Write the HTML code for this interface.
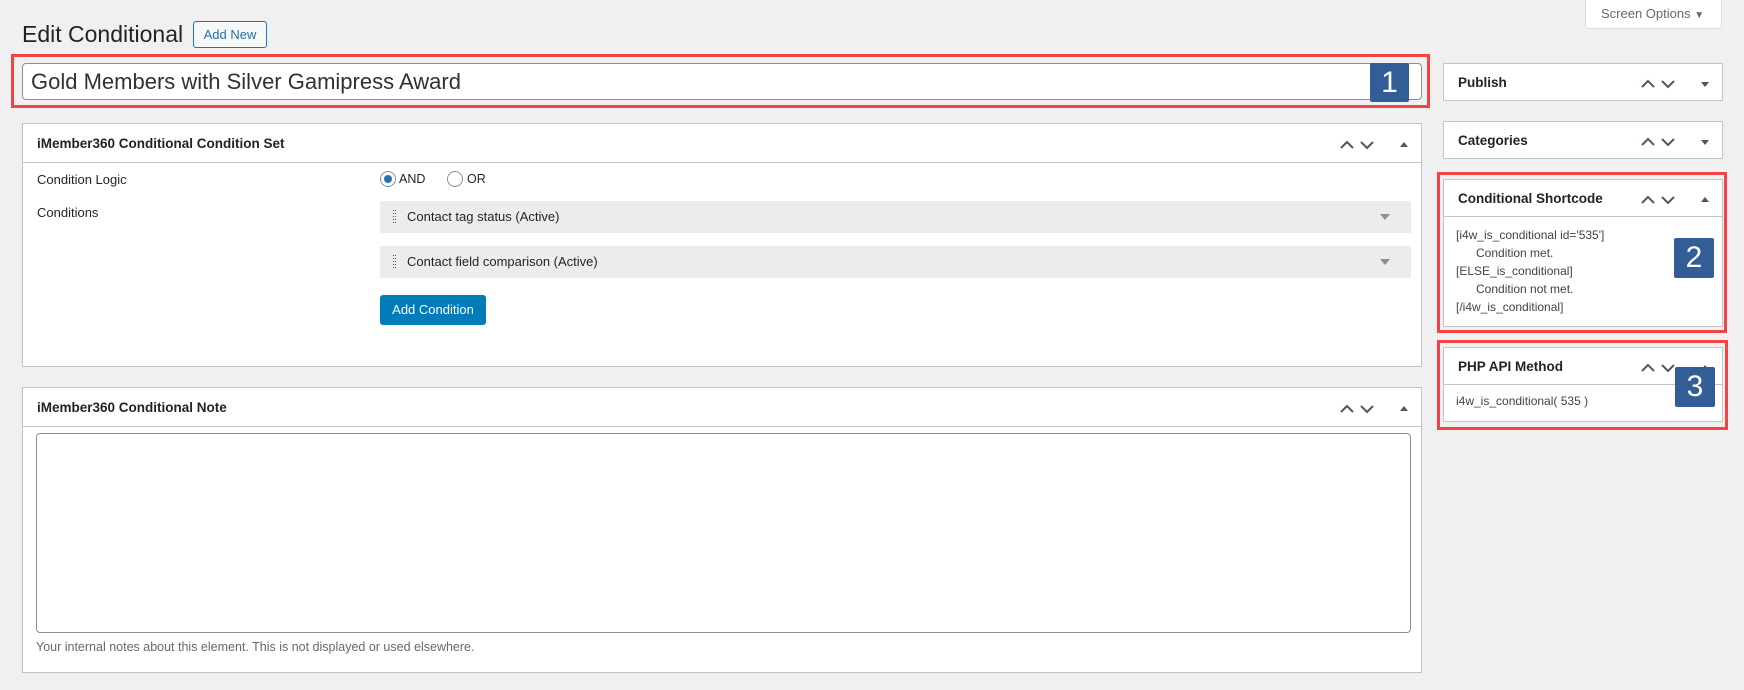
<!DOCTYPE html>
<html><head><style>
*{box-sizing:border-box;margin:0;padding:0}
body{width:1744px;height:690px;background:#f0f0f1;font-family:"Liberation Sans",sans-serif;color:#1d2327;position:relative;overflow:hidden;font-size:13px}
.a{position:absolute;white-space:nowrap}
.box{position:absolute;background:#fff;border:1px solid #c3c4c7}
.hd{position:absolute;left:0;right:0;top:0;border-bottom:1px solid #c3c4c7}
.ht{position:absolute;left:14px;font-weight:bold;font-size:13.5px}
.red{position:absolute;border:3px solid #f04447}
.badge{position:absolute;background:#325d96;color:#fff;font-size:30px;text-align:center;border-radius:2px}
.ic{position:absolute}
</style></head><body>
<div class="a" style="left:1585px;top:-1px;width:137px;height:30px;background:#fff;border:1px solid #dcdcde;border-radius:0 0 4px 4px;color:#646970;font-size:13px;line-height:28px;padding-left:15px">Screen Options <span style="font-size:10px">▼</span></div>
<div class="a" style="left:22px;top:21px;font-size:23px">Edit Conditional</div>
<div class="a" style="left:193px;top:21px;width:74px;height:27px;border:1px solid #2271b1;border-radius:3px;color:#2271b1;font-size:13px;line-height:25px;text-align:center;background:#f6f7f7">Add New</div>

<div class="red" style="left:11px;top:54px;width:1419px;height:54px"></div>
<div class="a" style="left:22px;top:63px;width:1400px;height:37px;background:#fff;border:1px solid #8c8f94;border-radius:4px;font-size:22px;line-height:35px;padding-left:8px;color:#2c3338">Gold Members with Silver Gamipress Award</div>
<div class="badge" style="left:1370px;top:63px;width:39px;height:39px;line-height:39px">1</div>

<!-- condition set -->
<div class="box" style="left:22px;top:123px;width:1400px;height:244px">
 <div class="hd" style="height:39px"><div class="ht" style="top:12px">iMember360 Conditional Condition Set</div></div>
 <svg class="ic" style="left:1316px;top:13px" width="76" height="14"><path d="M2 11 L8 5 L14 11 M22 5 L28 11 L34 5" stroke="#50575e" stroke-width="2" fill="none"/><path d="M61 10 L65 5 L69 10Z" fill="#50575e"/></svg>
 <div class="a" style="left:14px;top:48px">Condition Logic</div>
 <div class="a" style="left:14px;top:81px">Conditions</div>
 <div class="a" style="left:357px;top:47px;width:16px;height:16px;border:1px solid #8c8f94;border-radius:50%"><div style="margin:3px;width:8px;height:8px;border-radius:50%;background:#2271b1"></div></div>
 <div class="a" style="left:376px;top:48px;font-size:12.5px">AND</div>
 <div class="a" style="left:424px;top:47px;width:16px;height:16px;border:1px solid #8c8f94;border-radius:50%"></div>
 <div class="a" style="left:444px;top:48px;font-size:12.5px">OR</div>
 <div class="a" style="left:357px;top:77px;width:1031px;height:32px;background:#ececec"><svg class="a" style="left:13px;top:9px" width="4" height="14"><g fill="#555"><rect x="0" y="0" width="1" height="1"/><rect x="2" y="0" width="1" height="1"/><rect x="0" y="3" width="1" height="1"/><rect x="2" y="3" width="1" height="1"/><rect x="0" y="6" width="1" height="1"/><rect x="2" y="6" width="1" height="1"/><rect x="0" y="9" width="1" height="1"/><rect x="2" y="9" width="1" height="1"/><rect x="0" y="12" width="1" height="1"/><rect x="2" y="12" width="1" height="1"/></g></svg><span class="a" style="left:27px;top:8px">Contact tag status (Active)</span><svg class="a" style="right:21px;top:13px" width="10" height="6"><path d="M0 0H10L5 6Z" fill="#8c8f94"/></svg></div>
 <div class="a" style="left:357px;top:122px;width:1031px;height:32px;background:#ececec"><svg class="a" style="left:13px;top:9px" width="4" height="14"><g fill="#555"><rect x="0" y="0" width="1" height="1"/><rect x="2" y="0" width="1" height="1"/><rect x="0" y="3" width="1" height="1"/><rect x="2" y="3" width="1" height="1"/><rect x="0" y="6" width="1" height="1"/><rect x="2" y="6" width="1" height="1"/><rect x="0" y="9" width="1" height="1"/><rect x="2" y="9" width="1" height="1"/><rect x="0" y="12" width="1" height="1"/><rect x="2" y="12" width="1" height="1"/></g></svg><span class="a" style="left:27px;top:8px">Contact field comparison (Active)</span><svg class="a" style="right:21px;top:13px" width="10" height="6"><path d="M0 0H10L5 6Z" fill="#8c8f94"/></svg></div>
 <div class="a" style="left:357px;top:171px;width:106px;height:30px;background:#007cba;border-radius:3px;color:#fff;font-size:13px;line-height:30px;text-align:center">Add Condition</div>
</div>

<!-- note -->
<div class="box" style="left:22px;top:387px;width:1400px;height:286px">
 <div class="hd" style="height:39px"><div class="ht" style="top:12px">iMember360 Conditional Note</div></div>
 <svg class="ic" style="left:1316px;top:13px" width="76" height="14"><path d="M2 11 L8 5 L14 11 M22 5 L28 11 L34 5" stroke="#50575e" stroke-width="2" fill="none"/><path d="M61 10 L65 5 L69 10Z" fill="#50575e"/></svg>
 <div class="a" style="left:13px;top:45px;width:1375px;height:200px;border:1px solid #8c8f94;border-radius:4px"></div>
 <div class="a" style="left:13px;top:252px;color:#646970;font-size:12.5px">Your internal notes about this element. This is not displayed or used elsewhere.</div>
</div>

<!-- sidebar -->
<div class="box" style="left:1443px;top:63px;width:280px;height:38px"><div class="ht" style="top:11px">Publish</div><svg class="ic" style="left:196px;top:12px" width="76" height="14"><path d="M2 11 L8 5 L14 11 M22 5 L28 11 L34 5" stroke="#50575e" stroke-width="2" fill="none"/><path d="M61 6 L65 11 L69 6Z" fill="#50575e"/></svg></div>
<div class="box" style="left:1443px;top:121px;width:280px;height:38px"><div class="ht" style="top:11px">Categories</div><svg class="ic" style="left:196px;top:12px" width="76" height="14"><path d="M2 11 L8 5 L14 11 M22 5 L28 11 L34 5" stroke="#50575e" stroke-width="2" fill="none"/><path d="M61 6 L65 11 L69 6Z" fill="#50575e"/></svg></div>

<div class="red" style="left:1437px;top:172px;width:290px;height:161px"></div>
<div class="box" style="left:1443px;top:179px;width:280px;height:148px">
 <div class="hd" style="height:37px"><div class="ht" style="top:11px">Conditional Shortcode</div><svg class="ic" style="left:196px;top:12px" width="76" height="14"><path d="M2 11 L8 5 L14 11 M22 5 L28 11 L34 5" stroke="#50575e" stroke-width="2" fill="none"/><path d="M61 10 L65 5 L69 10Z" fill="#50575e"/></svg></div>
 <div class="a" style="left:12px;top:46px;font-size:12px;line-height:18px;color:#3c434a">[i4w_is_conditional id='535']<br>&nbsp;&nbsp;&nbsp;&nbsp;&nbsp;&nbsp;Condition met.<br>[ELSE_is_conditional]<br>&nbsp;&nbsp;&nbsp;&nbsp;&nbsp;&nbsp;Condition not met.<br>[/i4w_is_conditional]</div>
</div>
<div class="badge" style="left:1674px;top:238px;width:40px;height:40px;line-height:40px">2</div>

<div class="red" style="left:1437px;top:340px;width:291px;height:90px"></div>
<div class="box" style="left:1443px;top:347px;width:280px;height:75px">
 <div class="hd" style="height:37px"><div class="ht" style="top:11px">PHP API Method</div><svg class="ic" style="left:196px;top:12px" width="76" height="14"><path d="M2 11 L8 5 L14 11 M22 5 L28 11 L34 5" stroke="#50575e" stroke-width="2" fill="none"/><path d="M61 10 L65 5 L69 10Z" fill="#50575e"/></svg></div>
 <div class="a" style="left:12px;top:46px;font-size:12px;color:#3c434a">i4w_is_conditional( 535 )</div>
</div>
<div class="badge" style="left:1675px;top:367px;width:40px;height:40px;line-height:40px">3</div>
</body></html>
